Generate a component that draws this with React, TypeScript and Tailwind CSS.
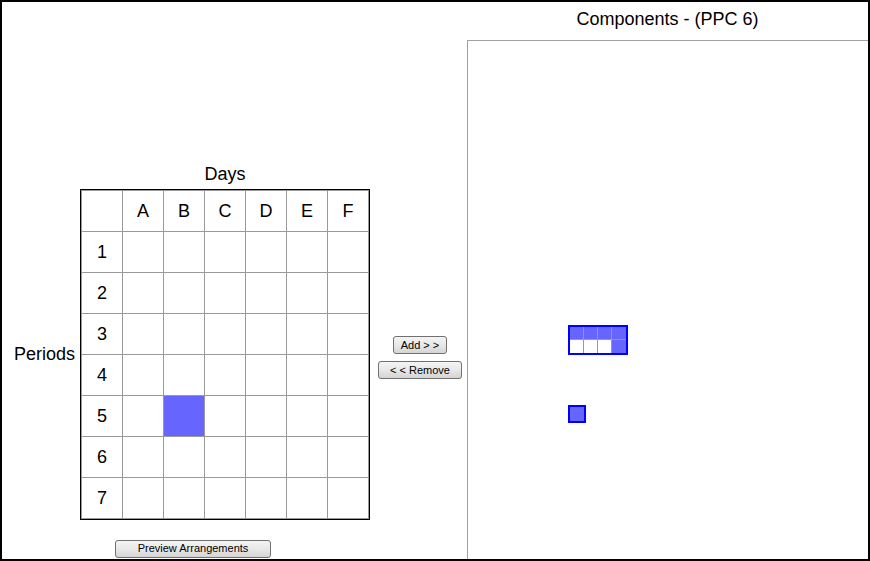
import React from 'react';

const days = ['A', 'B', 'C', 'D', 'E', 'F'];
const periods = [1, 2, 3, 4, 5, 6, 7];

// which grid slots are taken: [period, dayIndex]
const filled = new Set(['5-1']);

const pieceTop = [true, true, true, true];
const pieceBottom = [false, false, false, true];

const Btn = ({ children, className = '' }: { children: React.ReactNode; className?: string }) => (
  <button
    className={`h-[18px] rounded-[3px] border border-[#707070] bg-gradient-to-b from-[#f4f4f4] via-[#e8e8e8] to-[#d4d4d4] text-[11px] leading-none text-black ${className}`}
  >
    {children}
  </button>
);

export default function App() {
  return (
    <div
      className="box-border flex h-[561px] w-[870px] border-2 border-black bg-white text-black"
      style={{ fontFamily: '"Liberation Sans", Arial, sans-serif' }}
    >
      {/* left side: timetable grid */}
      <div className="flex w-[465px] shrink-0 flex-col">
        <div className="ml-[78px] mt-[162px] w-[290px] text-center text-[18px] leading-[20px]">Days</div>
        <div className="mt-[5px] flex items-center">
          <div className="w-[78px] pl-[12px] text-[18px]">Periods</div>
          <div className="border border-black">
            <div className="border-l border-t border-[#9a9a9a]">
              <div className="flex">
                <div className="box-border h-[41px] w-[41px] border-b border-r border-[#9a9a9a]" />
                {days.map((d) => (
                  <div
                    key={d}
                    className="box-border flex h-[41px] w-[41px] items-center justify-center border-b border-r border-[#9a9a9a] text-[18px]"
                  >
                    {d}
                  </div>
                ))}
              </div>
              {periods.map((p) => (
                <div key={p} className="flex">
                  <div className="box-border flex h-[41px] w-[41px] items-center justify-center border-b border-r border-[#9a9a9a] text-[18px]">
                    {p}
                  </div>
                  {days.map((d, i) => (
                    <div
                      key={d}
                      className={`box-border h-[41px] w-[41px] border-b border-r border-[#9a9a9a] ${
                        filled.has(`${p}-${i}`) ? 'bg-[#6666ff]' : 'bg-white'
                      }`}
                    />
                  ))}
                </div>
              ))}
            </div>
          </div>
          <div className="mt-[6px] flex flex-1 flex-col items-center gap-[7px] pl-[3px]">
            <Btn className="w-[54px]">Add &gt; &gt;</Btn>
            <Btn className="w-[84px]">&lt; &lt; Remove</Btn>
          </div>
        </div>
        <div className="ml-[113px] mt-[15px]">
          <Btn className="w-[156px]">Preview Arrangements</Btn>
        </div>
      </div>

      {/* right side: components panel */}
      <div className="flex flex-1 flex-col">
        <div className="h-[38px] pt-[7px] text-center text-[18px] leading-[20px]">Components - (PPC 6)</div>
        <div className="relative flex-1 border-l border-t border-[#a0a0a0]">
          <div className="absolute left-[100px] top-[284px] border-2 border-[#0000ff]">
            <div className="flex">
              {pieceTop.map((on, i) => (
                <div
                  key={i}
                  className={`box-border h-[13px] w-[14px] border-b border-[#9a9a9a] ${i < 3 ? 'border-r' : ''} ${
                    on ? 'bg-[#6666ff]' : 'bg-white'
                  }`}
                />
              ))}
            </div>
            <div className="flex">
              {pieceBottom.map((on, i) => (
                <div
                  key={i}
                  className={`box-border h-[13px] w-[14px] border-[#9a9a9a] ${i < 3 ? 'border-r' : ''} ${
                    on ? 'bg-[#6666ff]' : 'bg-white'
                  }`}
                />
              ))}
            </div>
          </div>
          <div className="absolute left-[100px] top-[364px] h-[18px] w-[18px] border-2 border-[#0000ff] bg-[#6666ff]" />
        </div>
      </div>
    </div>
  );
}
